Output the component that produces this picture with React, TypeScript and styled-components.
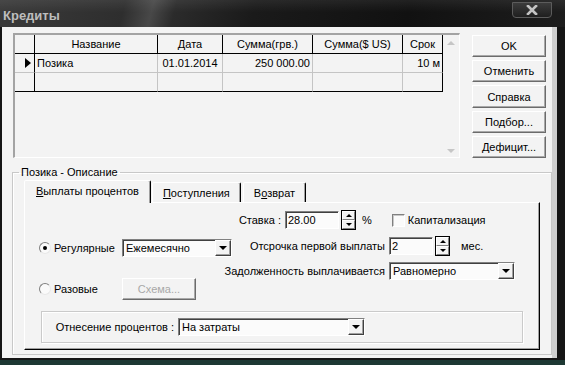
import React from 'react';
import styled, { createGlobalStyle } from 'styled-components';

const GlobalStyle = createGlobalStyle`
  html, body { margin: 0; padding: 0; background: #121212; }
  body { font-family: "Liberation Sans", Arial, sans-serif; font-size: 11px; color: #000; }
  *, *::before, *::after { box-sizing: border-box; }
`;

const Window = styled.div`
  width: 565px;
  height: 365px;
  display: flex;
  flex-direction: column;
  background: #141414;
  overflow: hidden;
`;

const TitleBar = styled.div`
  height: 27px;
  flex: none;
  display: flex;
  justify-content: space-between;
  align-items: flex-start;
  padding: 0 13px 0 3px;
  background:
    linear-gradient(180deg, rgba(255,255,255,0.07) 0%, rgba(255,255,255,0) 45%),
    linear-gradient(104deg, #3a3a3a 0%, #2e2e2e 22%, #484848 27%, #2b2b2b 31%, #1a1a1a 45%, #111 72%, #1d1d1d 100%);
`;

const Title = styled.span`
  font-size: 13px;
  font-weight: bold;
  color: #bdbdbd;
  line-height: 27px;
  padding-top: 2px;
`;

const CloseButton = styled.div`
  margin-top: 2px;
  width: 40px;
  height: 16px;
  display: flex;
  align-items: center;
  justify-content: center;
  border: 1px solid #5c5c5c;
  border-radius: 0 0 4px 4px;
  background: linear-gradient(180deg, #3c3c3c, #1f1f1f);
`;

const Frame = styled.div`
  flex: 1;
  display: flex;
  padding: 0 8px 0 2px;
  background: #151515;
  border-bottom: 5px solid #1d3833;
`;

const Client = styled.div`
  flex: 1;
  display: flex;
  flex-direction: column;
  background: #f3f3f3;
  border-right: 5px solid #cfcfcf;
  margin-bottom: 2px;
  padding: 6px 0 0 10px;
`;

const TopSection = styled.div`
  display: flex;
  gap: 12px;
  margin-left: 1px;
  height: 125px;
  flex: none;
`;

const DataGrid = styled.div`
  width: 447px;
  height: 125px;
  display: flex;
  border-style: solid;
  border-width: 2px 1px 1px 2px;
  border-color: #a3a3a3 #ffffff #ffffff #a3a3a3;
`;

const Table = styled.div`
  display: grid;
  grid-template-columns: 20px 123px 65px 90px 90px 40px;
  grid-auto-rows: 19px;
  align-content: start;
`;

const Cell = styled.div<{ $right?: boolean; $bottom?: boolean; $align?: string }>`
  border-right: 1px solid ${p => (p.$right ? '#000' : '#c4c4c4')};
  border-bottom: 1px solid ${p => (p.$bottom ? '#000' : '#c4c4c4')};
  padding: 0 2px;
  line-height: 18px;
  white-space: nowrap;
  overflow: hidden;
  display: flex;
  align-items: center;
  justify-content: ${p => (p.$align === 'center' ? 'center' : p.$align === 'right' ? 'flex-end' : 'flex-start')};
`;

const RowPointer = styled.span`
  width: 0;
  height: 0;
  border-left: 6px solid #000;
  border-top: 5px solid transparent;
  border-bottom: 5px solid transparent;
  margin-left: 8px;
`;

const ScrollBar = styled.div`
  width: 16px;
  display: flex;
  flex-direction: column;
  justify-content: space-between;
  align-items: center;
  padding: 6px 0 4px;
`;

const ScrollArrow = styled.span<{ $down?: boolean }>`
  width: 0;
  height: 0;
  border-left: 4px solid transparent;
  border-right: 4px solid transparent;
  ${p => (p.$down ? 'border-top: 4px solid #c6c6c6;' : 'border-bottom: 4px solid #c6c6c6;')}
`;

const ButtonColumn = styled.div`
  width: 74px;
  display: flex;
  flex-direction: column;
  gap: 3px;
  margin-top: 2px;
`;

const PushButton = styled.button<{ $w?: number; $h?: number }>`
  width: ${p => (p.$w ? `${p.$w}px` : '100%')};
  height: ${p => p.$h || 23}px;
  padding: 0;
  font-family: inherit;
  font-size: 11px;
  color: #000;
  background: #f3f3f3;
  border: 1px solid;
  border-color: #ffffff #6b6b6b #6b6b6b #ffffff;
  box-shadow: inset -1px -1px #a8a8a8;
  &:disabled { color: #a8a8a8; }
`;

const GroupBox = styled.fieldset`
  margin: 8px 0 2px 0;
  padding: 1px 11px 4px 11px;
  border: 1px solid #c8c8c8;
  box-shadow: inset 1px 1px #ffffff;
  min-width: 0;
`;

const GroupLegend = styled.legend`
  padding: 0 2px;
  margin-left: -5px;
  font-size: 11px;
  line-height: 13px;
`;

const TabStrip = styled.div`
  display: flex;
  align-items: flex-end;
  height: 22px;
  padding-left: 2px;
`;

const Tab = styled.div<{ $active?: boolean }>`
  height: ${p => (p.$active ? 23 : 20)}px;
  padding: ${p => (p.$active ? '4px 11px 0' : '0 10px')};
  margin: ${p => (p.$active ? '0 -1px -1px -2px' : '0 0 0 2px')};
  position: relative;
  z-index: ${p => (p.$active ? 1 : 0)};
  background: #f3f3f3;
  border-style: solid;
  border-width: 1px 1px 0 1px;
  border-color: #ffffff #000 transparent #ffffff;
  border-radius: 2px 2px 0 0;
  box-shadow: inset -1px 0 #a0a0a0;
  display: flex;
  align-items: ${p => (p.$active ? 'flex-start' : 'center')};
  white-space: nowrap;
`;

const TabPage = styled.div`
  border: 1px solid;
  border-color: #ffffff #000 #000 #ffffff;
  box-shadow: inset -1px -1px #a0a0a0;
  padding: 7px 0 6px 0;
`;

const TopArea = styled.div`
  display: flex;
  height: 91px;
`;

const LeftCol = styled.div`
  width: 210px;
  padding: 29px 0 0 14px;
  display: flex;
  flex-direction: column;
  gap: 21px;
`;

const RightCol = styled.div`
  flex: 1;
  display: flex;
  flex-direction: column;
  gap: 6px;
`;

const Line = styled.div<{ $h?: number }>`
  display: flex;
  align-items: center;
  height: ${p => p.$h || 20}px;
`;

const RadioOption = styled.label<{ $w: number }>`
  width: ${p => p.$w}px;
  display: flex;
  align-items: center;
  gap: 3px;
`;

const Radio = styled.span<{ $on?: boolean }>`
  width: 12px;
  height: 12px;
  border-radius: 50%;
  border: 1px solid;
  border-color: #808080 #e8e8e8 #e8e8e8 #808080;
  background: #fafafa;
  display: flex;
  align-items: center;
  justify-content: center;
  &::after {
    content: '';
    width: 4px;
    height: 4px;
    border-radius: 50%;
    background: ${p => (p.$on ? '#000' : 'transparent')};
  }
`;

const FieldLabel = styled.span<{ $w?: number }>`
  width: ${p => (p.$w ? `${p.$w}px` : 'auto')};
  flex: none;
  display: flex;
  justify-content: flex-end;
  margin-right: 4px;
  white-space: nowrap;
`;

const TextField = styled.div<{ $w: number }>`
  width: ${p => p.$w}px;
  height: 18px;
  background: #fbfbfb;
  border: 1px solid;
  border-color: #808080 #ffffff #ffffff #808080;
  box-shadow: inset 1px 1px #404040;
  padding: 0 2px;
  line-height: 16px;
  font-size: 11px;
`;

const Spinner = styled.div`
  width: 15px;
  height: 20px;
  margin-left: 2px;
  border: 1px solid #000;
  display: flex;
  flex-direction: column;
`;

const SpinHalf = styled.div<{ $down?: boolean }>`
  flex: 1;
  display: flex;
  align-items: center;
  justify-content: center;
  border-top: 1px solid #fff;
  border-left: 1px solid #fff;
  border-bottom: 1px solid #808080;
  border-right: 1px solid #808080;
  background: #f3f3f3;
  &::after {
    content: '';
    border-left: 3px solid transparent;
    border-right: 3px solid transparent;
    ${p => (p.$down ? 'border-top: 3px solid #000;' : 'border-bottom: 3px solid #000;')}
  }
`;

const Unit = styled.span<{ $ml: number }>`
  margin-left: ${p => p.$ml}px;
`;

const CheckOption = styled.label`
  display: flex;
  align-items: center;
  gap: 3px;
  margin-left: 20px;
`;

const CheckBox = styled.span`
  width: 13px;
  height: 13px;
  background: #fbfbfb;
  border: 1px solid;
  border-color: #808080 #ffffff #ffffff #808080;
  box-shadow: inset 1px 1px #c8c8c8;
`;

const ComboBox = styled.div<{ $w: number }>`
  width: ${p => p.$w}px;
  height: 18px;
  display: flex;
  background: #fbfbfb;
  border: 1px solid;
  border-color: #808080 #ffffff #ffffff #808080;
  box-shadow: inset 1px 1px #404040;
`;

const ComboText = styled.span`
  flex: 1;
  padding: 0 3px;
  line-height: 16px;
  white-space: nowrap;
`;

const ComboArrow = styled.span`
  width: 16px;
  height: 16px;
  display: flex;
  align-items: center;
  justify-content: center;
  background: #f3f3f3;
  border: 1px solid;
  border-color: #ffffff #404040 #404040 #ffffff;
  box-shadow: inset -1px -1px #a0a0a0;
  &::after {
    content: '';
    border-left: 4px solid transparent;
    border-right: 4px solid transparent;
    border-top: 4px solid #000;
  }
`;

const InnerGroup = styled.div`
  margin: 10px 16px 0 16px;
  height: 32px;
  display: flex;
  align-items: center;
  padding-left: 13px;
  border: 1px solid #cacaca;
  box-shadow: inset 1px 1px #ffffff, 1px 1px #ffffff;
`;

const Combo = ({ w, text }: { w: number; text: string }) => (
  <ComboBox $w={w}>
    <ComboText>{text}</ComboText>
    <ComboArrow />
  </ComboBox>
);

const Spin = () => (
  <Spinner>
    <SpinHalf />
    <SpinHalf $down />
  </Spinner>
);

const columns = ['', 'Название', 'Дата', 'Сумма(грв.)', 'Сумма($ US)', 'Срок'];

export default function App() {
  return (
    <>
      <GlobalStyle />
      <Window>
        <TitleBar>
          <Title>Кредиты</Title>
          <CloseButton>
            <svg width="14" height="10" viewBox="0 0 14 10">
              <path d="M3 1 L11 9 M11 1 L3 9" stroke="#c4c4c4" strokeWidth="2.6" strokeLinecap="square" />
            </svg>
          </CloseButton>
        </TitleBar>
        <Frame>
          <Client>
            <TopSection>
              <DataGrid>
                <Table>
                  {columns.map((c, i) => (
                    <Cell key={c + i} $right $bottom $align="center">{c}</Cell>
                  ))}
                  <Cell $right><RowPointer /></Cell>
                  <Cell>Позика</Cell>
                  <Cell $align="center">01.01.2014</Cell>
                  <Cell $align="right">250 000.00</Cell>
                  <Cell />
                  <Cell $right $align="right">10 м</Cell>
                  <Cell $right $bottom />
                  <Cell $bottom />
                  <Cell $bottom />
                  <Cell $bottom />
                  <Cell $bottom />
                  <Cell $right $bottom />
                </Table>
                <ScrollBar>
                  <ScrollArrow />
                  <ScrollArrow $down />
                </ScrollBar>
              </DataGrid>
              <ButtonColumn>
                <PushButton>OK</PushButton>
                <PushButton>Отменить</PushButton>
                <PushButton>Справка</PushButton>
                <PushButton>Подбор...</PushButton>
                <PushButton>Дефицит...</PushButton>
              </ButtonColumn>
            </TopSection>
            <GroupBox>
              <GroupLegend>Позика - Описание</GroupLegend>
              <TabStrip>
                <Tab $active><span><u>В</u>ыплаты процентов</span></Tab>
                <Tab><span><u>П</u>оступления</span></Tab>
                <Tab><span>В<u>о</u>зврат</span></Tab>
              </TabStrip>
              <TabPage>
                <TopArea>
                  <LeftCol>
                    <Line $h={18}>
                      <RadioOption $w={83}><Radio $on />Регулярные</RadioOption>
                      <Combo w={110} text="Ежемесячно" />
                    </Line>
                    <Line $h={22}>
                      <RadioOption $w={83}><Radio />Разовые</RadioOption>
                      <PushButton $w={74} $h={22} disabled>Схема...</PushButton>
                    </Line>
                  </LeftCol>
                  <RightCol>
                    <Line>
                      <FieldLabel $w={46}>Ставка :</FieldLabel>
                      <TextField $w={54}>28.00</TextField>
                      <Spin />
                      <Unit $ml={6}>%</Unit>
                      <CheckOption><CheckBox />Капитализация</CheckOption>
                    </Line>
                    <Line>
                      <FieldLabel $w={150}>Отсрочка первой выплаты</FieldLabel>
                      <TextField $w={44}>2</TextField>
                      <Spin />
                      <Unit $ml={11}>мес.</Unit>
                    </Line>
                    <Line $h={18}>
                      <FieldLabel $w={150}>Задолженность выплачивается</FieldLabel>
                      <Combo w={126} text="Равномерно" />
                    </Line>
                  </RightCol>
                </TopArea>
                <InnerGroup>
                  <FieldLabel $w={119}>Отнесение процентов :</FieldLabel>
                  <Combo w={187} text="На затраты" />
                </InnerGroup>
              </TabPage>
            </GroupBox>
          </Client>
        </Frame>
      </Window>
    </>
  );
}
